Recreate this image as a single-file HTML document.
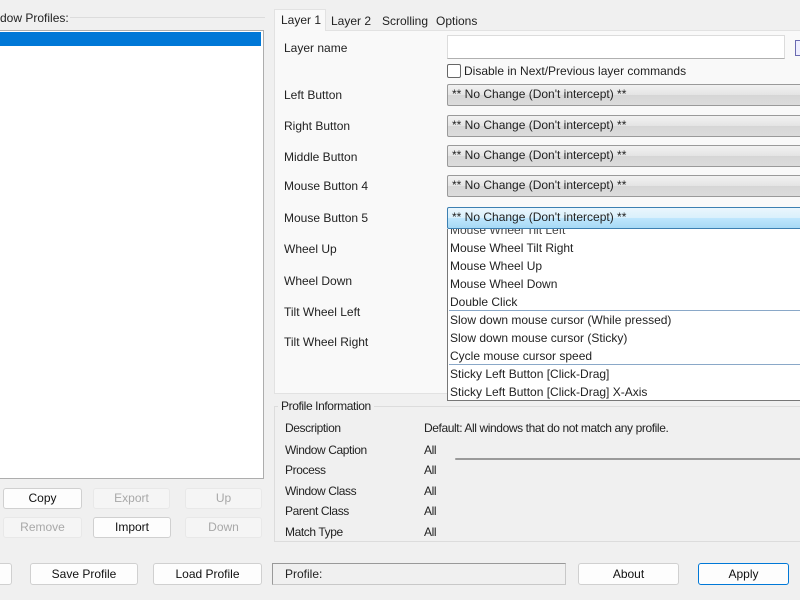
<!DOCTYPE html>
<html><head><meta charset="utf-8"><style>
*{box-sizing:border-box;margin:0;padding:0}
body{width:800px;height:600px;overflow:hidden;background:#f0f0f0;font-family:"Liberation Sans",sans-serif;font-size:12px;color:#222;position:relative}
.a{position:absolute;white-space:nowrap}
.btn{position:absolute;height:21px;background:#fdfdfd;border:1px solid #d0d0d0;border-radius:3px;text-align:center;line-height:19px;font-size:12px;color:#111}
.dis{background:#f5f5f5;border-color:#e8e8e8;color:#a8a8a8}
.combo{position:absolute;left:447px;width:360px;height:22px;border:1px solid #9a9a9a;border-radius:2px;background:linear-gradient(#f2f2f2,#e4e4e4 50%,#d6d6d6 51%,#dcdcdc);padding-left:4px;line-height:19px}
.lbl{position:absolute;left:284px}
.li{position:absolute;left:2px;font-size:12px}
.pi{position:absolute;font-size:12px;letter-spacing:-0.4px}
</style></head><body>
<div class="a" style="left:0;top:11px">dow Profiles:</div>
<div class="a" style="left:70px;top:17px;width:195px;height:1px;background:#dcdcdc"></div>
<div class="a" style="left:0;top:30px;width:264px;height:449px;background:#fff;border:1px solid #adadad;border-left:none"></div>
<div class="a" style="left:0;top:32px;width:261px;height:14px;background:#0078d7"></div>

<div class="a" style="left:274px;top:30px;width:530px;height:364px;background:#f9f9f9;border:1px solid #e2e2e2"></div>
<div class="a" style="left:274px;top:9px;width:52px;height:22px;background:#f9f9f9;border:1px solid #e2e2e2;border-bottom:none;padding:3px 0 0 6px">Layer 1</div>
<div class="a" style="left:327px;top:12px;padding:2px 4px">Layer 2</div>
<div class="a" style="left:378px;top:12px;padding:2px 4px">Scrolling</div>
<div class="a" style="left:432px;top:12px;padding:2px 4px">Options</div>

<div class="lbl" style="top:41px">Layer name</div>
<div class="a" style="left:447px;top:35px;width:338px;height:24px;background:#fff;border:1px solid #dcdcdc;border-bottom-color:#b0b0b0"></div>
<div class="a" style="left:795px;top:40px;width:10px;height:16px;border:1px solid #6a6ab0;background:#eef"></div>
<div class="a" style="left:447px;top:64px;width:14px;height:14px;border:1px solid #666;border-radius:2px;background:#fff"></div>
<div class="a" style="left:464px;top:64px">Disable in Next/Previous layer commands</div>

<div class="lbl" style="top:88px">Left Button</div>
<div class="lbl" style="top:119px">Right Button</div>
<div class="lbl" style="top:150px">Middle Button</div>
<div class="lbl" style="top:179px">Mouse Button 4</div>
<div class="lbl" style="top:211px">Mouse Button 5</div>
<div class="lbl" style="top:242px">Wheel Up</div>
<div class="lbl" style="top:274px">Wheel Down</div>
<div class="lbl" style="top:305px">Tilt Wheel Left</div>
<div class="lbl" style="top:335px">Tilt Wheel Right</div>

<div class="combo" style="top:84px">** No Change (Don't intercept) **</div>
<div class="combo" style="top:115px">** No Change (Don't intercept) **</div>
<div class="combo" style="top:145px">** No Change (Don't intercept) **</div>
<div class="combo" style="top:175px">** No Change (Don't intercept) **</div>
<div class="combo" style="top:207px;border-color:#3c7fb1;background:linear-gradient(#eaf6fd,#d9f0fc 50%,#bee6fd 51%,#a7d9f5)">** No Change (Don't intercept) **</div>

<div class="a" style="left:447px;top:229px;width:360px;height:172px;background:#fff;border:1px solid #777;border-top:none;overflow:hidden">
<div class="li" style="top:-6px;color:#444">Mouse Wheel Tilt Left</div>
<div class="li" style="top:12px">Mouse Wheel Tilt Right</div>
<div class="li" style="top:30px">Mouse Wheel Up</div>
<div class="li" style="top:48px">Mouse Wheel Down</div>
<div class="li" style="top:66px">Double Click</div>
<div class="a" style="left:1px;top:81px;width:360px;height:1px;background:#8aa8c8"></div>
<div class="li" style="top:84px">Slow down mouse cursor (While pressed)</div>
<div class="li" style="top:102px">Slow down mouse cursor (Sticky)</div>
<div class="li" style="top:120px">Cycle mouse cursor speed</div>
<div class="a" style="left:1px;top:135px;width:360px;height:1px;background:#8aa8c8"></div>
<div class="li" style="top:138px">Sticky Left Button [Click-Drag]</div>
<div class="li" style="top:156px">Sticky Left Button [Click-Drag] X-Axis</div>
</div>

<div class="a" style="left:274px;top:406px;width:530px;height:136px;border:1px solid #dcdcdc;border-right:none"></div>
<div class="pi" style="left:278px;top:399px;background:#f0f0f0;padding:0 3px">Profile Information</div>
<div class="pi" style="left:285px;top:421px">Description</div>
<div class="pi" style="left:424px;top:421px">Default: All windows that do not match any profile.</div>
<div class="pi" style="left:285px;top:443px">Window Caption</div>
<div class="pi" style="left:285px;top:463px">Process</div>
<div class="pi" style="left:285px;top:484px">Window Class</div>
<div class="pi" style="left:285px;top:504px">Parent Class</div>
<div class="pi" style="left:285px;top:525px">Match Type</div>
<div class="pi" style="left:424px;top:443px">All</div>
<div class="pi" style="left:424px;top:463px">All</div>
<div class="pi" style="left:424px;top:484px">All</div>
<div class="pi" style="left:424px;top:504px">All</div>
<div class="pi" style="left:424px;top:525px">All</div>
<div class="a" style="left:455px;top:458px;width:350px;height:2px;background:#9a9a9a;border-radius:1px"></div>

<div class="btn" style="left:3px;top:488px;width:79px">Copy</div>
<div class="btn dis" style="left:93px;top:488px;width:77px">Export</div>
<div class="btn dis" style="left:185px;top:488px;width:77px">Up</div>
<div class="btn dis" style="left:3px;top:517px;width:79px">Remove</div>
<div class="btn" style="left:93px;top:517px;width:78px">Import</div>
<div class="btn dis" style="left:185px;top:517px;width:77px">Down</div>

<div class="btn" style="left:-4px;top:563px;width:16px;height:22px"></div>
<div class="btn" style="left:30px;top:563px;width:108px;height:22px;line-height:20px">Save Profile</div>
<div class="btn" style="left:153px;top:563px;width:109px;height:22px;line-height:20px">Load Profile</div>
<div class="a" style="left:272px;top:563px;width:294px;height:22px;border:1px solid #c8c8c8;border-left-color:#999;border-top-color:#999;padding:3px 0 0 12px">Profile:</div>
<div class="btn" style="left:578px;top:563px;width:101px;height:22px;line-height:20px">About</div>
<div class="btn" style="left:698px;top:563px;width:91px;height:22px;line-height:20px;border:1px solid #0078d7">Apply</div>
</body></html>
